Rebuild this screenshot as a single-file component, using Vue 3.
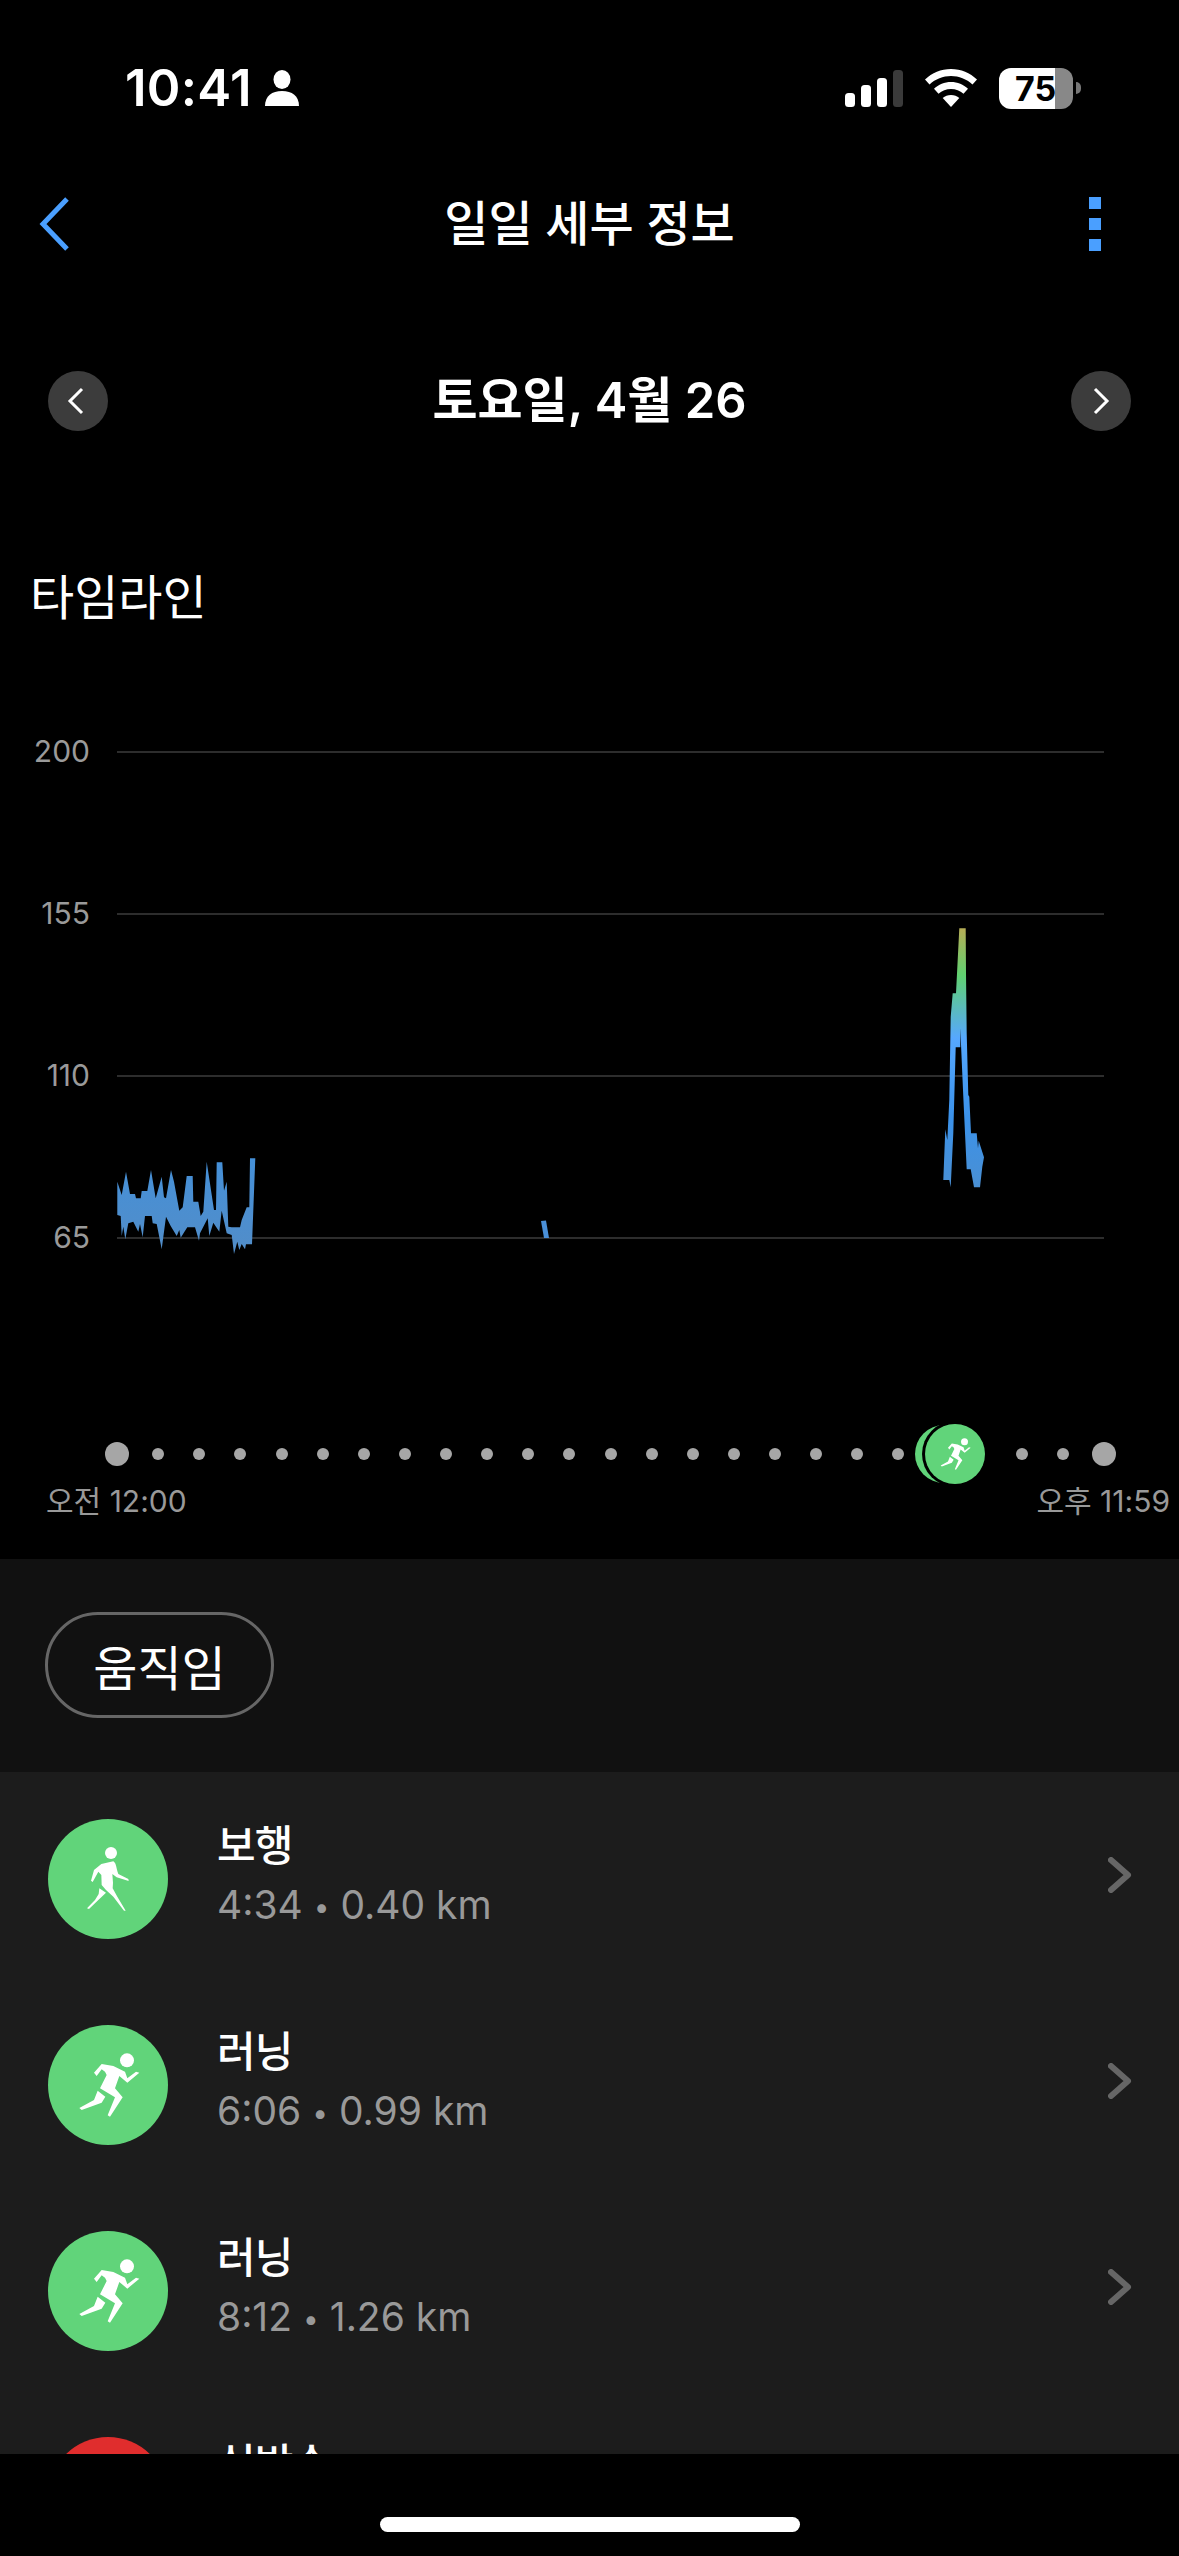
<script setup>
const walkPaths = [
  'M304 312 L340 304 C350 310 348 325 355 342 L385 357 L386 363 L350 352 L337 342 L339 368 L338 385 L352 410 L377 452 L372 452 L340 410 L318 390 L305 375 L304 345 L295 335 L278 366 L273 362 L282 330 Z',
  'M298 385 L318 398 L295 420 L267 447 L261 445 L285 420 L296 402 Z'
]
const runPaths = [
  'M282 938 L305 912 L340 918 L375 935 L382 955 L408 935 L418 938 L382 968 L358 948 L345 985 L368 1012 L330 1070 L323 1066 L345 1012 L300 985 L320 945 L315 935 L305 928 L290 948 Z',
  'M293 992 L316 1010 L305 1028 L245 1050 L238 1044 L282 1020 Z'
]
const rows = [
  { title: '보행', time: '4:34', dist: '0.40 km', kind: 'walk' },
  { title: '러닝', time: '6:06', dist: '0.99 km', kind: 'run' },
  { title: '러닝', time: '8:12', dist: '1.26 km', kind: 'run' },
  { title: '심박수', time: '', dist: '', kind: 'heart' }
]
const grid = [
  { y: 752, label: '200' },
  { y: 914, label: '155' },
  { y: 1076, label: '110' },
  { y: 1238, label: '65' }
]
const ticks = Array.from({ length: 25 }, (_, i) => i)

const leftPts = [[82,185],[95,225],[108,155],[120,222],[135,222],[138,235],[152,235],[155,213],[172,213],[183,150],[197,235],[215,170],[222,232],[228,235],[243,150],[252,185],[268,272],[278,262],[290,168],[308,168],[310,245],[325,245],[332,288],[340,275],[350,125],[372,270],[378,270],[380,127],[397,127],[402,212],[410,185],[415,320],[425,322],[450,322],[455,300],[470,262],[478,262],[480,115],[496,115],[486,373],[468,373],[465,388],[455,372],[448,390],[442,365],[432,402],[425,345],[410,340],[395,272],[388,335],[370,308],[358,348],[353,295],[330,340],[327,362],[315,322],[292,322],[272,353],[268,330],[260,348],[242,318],[228,290],[215,388],[200,312],[188,310],[185,288],[165,288],[158,352],[150,312],[145,335],[130,305],[115,310],[106,358],[100,320],[95,348],[92,288],[82,285]]
const leftPoly = leftPts.map(([x, y]) => `${(90 + x / 3).toFixed(1)},${(1120 + y / 3).toFixed(1)}`).join(' ')
const spikePts = [[178,85],[197,85],[198,220],[200,400],[205,585],[208,590],[213,700],[230,700],[234,745],[236,722],[252,772],[247,800],[240,862],[222,862],[212,808],[200,808],[195,700],[190,590],[181,385],[181,442],[167,442],[160,700],[152,862],[148,840],[130,840],[136,688],[142,720],[148,600],[152,350],[158,280],[168,280]]
const spikePoly = spikePts.map(([x, y]) => `${(900 + x / 3).toFixed(1)},${(900 + y / 3).toFixed(1)}`).join(' ')
</script>

<template>
  <div class="screen">
    <div class="status">
      <div class="status-left">
        <span class="clock">10:41</span>
        <svg class="person" width="36" height="36" viewBox="0 0 36 36">
          <ellipse cx="18" cy="9.5" rx="8.5" ry="9.5" fill="#fff" />
          <path d="M1 36 C1 26 8 21 18 21 C28 21 35 26 35 36 Z" fill="#fff" />
        </svg>
      </div>
      <div class="status-right">
        <svg width="58" height="37" viewBox="0 0 58 37" class="signal">
          <rect x="0" y="23" width="10" height="14" rx="3.5" fill="#fff" />
          <rect x="16" y="15" width="10" height="22" rx="3.5" fill="#fff" />
          <rect x="32" y="8" width="10" height="29" rx="3.5" fill="#fff" />
          <rect x="48" y="0" width="10" height="37" rx="3.5" fill="#3a3a3a" />
        </svg>
        <svg width="52" height="38" viewBox="0 0 52 38" class="wifi">
          <path d="M26 0 C36 0 45 4 52 10.5 L47.5 15.5 C41.5 10 34 7 26 7 C18 7 10.5 10 4.5 15.5 L0 10.5 C7 4 16 0 26 0 Z" fill="#fff" />
          <path d="M26 13 C32.5 13 38.5 15.5 43 19.8 L38.5 24.8 C35 21.6 30.7 20 26 20 C21.3 20 17 21.6 13.5 24.8 L9 19.8 C13.5 15.5 19.5 13 26 13 Z" fill="#fff" />
          <path d="M26 26 C29.3 26 32 27 34.3 29 L26 38 L17.7 29 C20 27 22.7 26 26 26 Z" fill="#fff" />
        </svg>
        <div class="battery">
          <div class="battery-body"><span>75</span></div>
          <div class="battery-tip"></div>
        </div>
      </div>
    </div>

    <div class="nav">
      <svg class="back" width="32" height="54" viewBox="0 0 32 54">
        <path d="M29 2 L5 27 L29 52" fill="none" stroke="#4a9fff" stroke-width="5" />
      </svg>
      <h1 class="nav-title">일일 세부 정보</h1>
      <div class="kebab"><i></i><i></i><i></i></div>
    </div>

    <div class="date-row">
      <div class="round">
        <svg class="arrow-left" width="20" height="28" viewBox="0 0 20 28"><path d="M16 2 L4 14 L16 26" fill="none" stroke="#fff" stroke-width="3" /></svg>
      </div>
      <div class="date">토요일, 4월 26</div>
      <div class="round">
        <svg width="20" height="28" viewBox="0 0 20 28"><path d="M4 2 L16 14 L4 26" fill="none" stroke="#fff" stroke-width="3" /></svg>
      </div>
    </div>

    <h2 class="section-title">타임라인</h2>

    <svg class="chart" width="1179" height="600" viewBox="0 700 1179 600">
      <defs>
        <linearGradient id="spikeGrad" gradientUnits="userSpaceOnUse" x1="0" y1="928" x2="0" y2="1190">
          <stop offset="0" stop-color="#b7ad56" />
          <stop offset="0.18" stop-color="#60d070" />
          <stop offset="0.42" stop-color="#56a8ff" />
          <stop offset="0.72" stop-color="#3b92ea" />
          <stop offset="1" stop-color="#4a8fd2" />
        </linearGradient>
        <linearGradient id="leftGrad" gradientUnits="userSpaceOnUse" x1="0" y1="1160" x2="0" y2="1255">
          <stop offset="0" stop-color="#4590d8" />
          <stop offset="1" stop-color="#528dc8" />
        </linearGradient>
      </defs>
      <g v-for="g in grid" :key="g.y">
        <line x1="117" x2="1104" :y1="g.y" :y2="g.y" stroke="#3d3d3d" stroke-width="1.5" />
        <text x="90" :y="g.y + 10" text-anchor="end" class="axis">{{ g.label }}</text>
      </g>
      <polygon :points="leftPoly" fill="url(#leftGrad)" />
      <path d="M541 1221 L546 1220.5 L549 1238 L544 1238 Z" fill="#4a90d8" />
      <polygon :points="spikePoly" fill="url(#spikeGrad)" />
    </svg>

    <div class="ticks">
      <div v-for="t in ticks" :key="t" class="tick">
        <span :class="['dot', { big: t === 0 || t === 24, hide: t === 20 || t === 21 }]"></span>
      </div>
      <div class="marker">
        <div class="crescent"></div>
        <div class="marker-main">
          <svg width="60" height="60" viewBox="144 795 360 360">
            <circle cx="381" cy="901" r="21" fill="#fff" />
            <path v-for="p in runPaths" :key="p" :d="p" fill="#fff" />
          </svg>
        </div>
      </div>
    </div>

    <div class="range">
      <span>오전 12:00</span>
      <span>오후 11:59</span>
    </div>

    <div class="filter">
      <div class="pill">움직임</div>
    </div>

    <div class="list">
      <div v-for="(r, i) in rows" :key="i" class="row">
        <div :class="['badge', r.kind]">
          <svg v-if="r.kind === 'walk'" width="120" height="120" viewBox="144 177 360 360">
            <circle cx="333" cy="279" r="18" fill="#fff" />
            <path v-for="p in walkPaths" :key="p" :d="p" fill="#fff" />
          </svg>
          <svg v-if="r.kind === 'run'" width="120" height="120" viewBox="144 795 360 360">
            <circle cx="381" cy="901" r="21" fill="#fff" />
            <path v-for="p in runPaths" :key="p" :d="p" fill="#fff" />
          </svg>
        </div>
        <div class="row-text">
          <div class="row-title">{{ r.title }}</div>
          <div class="row-sub">{{ r.time }}<span class="sep">•</span>{{ r.dist }}</div>
        </div>
        <svg class="chev" width="24" height="36" viewBox="0 0 24 36">
          <path d="M3 3 L20 18 L3 33" fill="none" stroke="#666" stroke-width="6" stroke-linecap="round" stroke-linejoin="round" />
        </svg>
      </div>
    </div>

    <div class="home"><div class="home-bar"></div></div>
  </div>
</template>

<style>
html, body { margin: 0; background: #000; }
</style>

<style scoped>
.screen {
  width: 1179px;
  height: 2556px;
  background: #000;
  color: #fff;
  display: flex;
  flex-direction: column;
  overflow: hidden;
  font-family: Inter, "Noto Sans CJK KR", sans-serif;
}
.status {
  height: 176px;
  flex: none;
  display: flex;
  justify-content: space-between;
  align-items: center;
  padding: 0 98px 0 125px;
}
.status-left { display: flex; align-items: center; gap: 12px; }
.clock { font-size: 51px; font-weight: 600; letter-spacing: 0.3px; line-height: 40px; }
.status-right { display: flex; align-items: center; }
.signal { margin-right: 22px; }
.wifi { margin-right: 22px; }
.battery { display: flex; align-items: center; gap: 3px; }
.battery-body {
  width: 74px;
  height: 41px;
  border-radius: 12px;
  background: linear-gradient(to right, #fff 56px, #888 56px);
  color: #000;
  font-size: 34px;
  font-weight: 700;
  line-height: 41px;
  padding-left: 16px;
  box-sizing: border-box;
}
.battery-tip {
  width: 5px;
  height: 12px;
  background: #777;
  border-radius: 0 6px 6px 0;
}
.nav {
  height: 96px;
  flex: none;
  display: grid;
  grid-template-columns: 1fr auto 1fr;
  align-items: center;
  padding: 0 78px 0 38px;
}
.nav-title { margin: 0 0 0 40px; font-size: 48px; font-weight: 500; line-height: 96px; }
.kebab { display: flex; flex-direction: column; gap: 9px; justify-self: end; }
.kebab i { display: block; width: 12px; height: 12px; background: #4a9fff; }
.date-row {
  margin-top: 81px;
  height: 96px;
  flex: none;
  display: flex;
  align-items: center;
  justify-content: space-between;
  padding: 0 48px;
}
.date { font-size: 49px; font-weight: 600; line-height: 96px; }
.round {
  width: 60px;
  height: 60px;
  border-radius: 50%;
  background: #3c3c3c;
  display: flex;
  align-items: center;
  justify-content: center;
}
.arrow-left { margin-right: 4px; }
.section-title {
  margin: 119px 0 0 30px;
  font-size: 48px;
  font-weight: 400;
  line-height: 60px;
  flex: none;
}
.chart { display: block; margin-top: 72px; flex: none; }
.axis { font-size: 30px; fill: #9a9a9a; font-family: Inter, sans-serif; }
.ticks {
  position: relative;
  margin-top: 142px;
  height: 24px;
  flex: none;
  display: flex;
  justify-content: space-between;
  padding: 0 63px 0 105px;
}
.tick { width: 24px; height: 24px; display: flex; align-items: center; justify-content: center; }
.dot { width: 12px; height: 12px; border-radius: 50%; background: #a6a6a6; }
.dot.big { width: 24px; height: 24px; }
.dot.hide { visibility: hidden; }
.marker { position: absolute; left: 915px; top: -18px; width: 70px; height: 60px; }
.crescent {
  position: absolute;
  left: 0;
  top: 1px;
  width: 58px;
  height: 58px;
  border-radius: 50%;
  background: #61d47a;
}
.marker-main {
  position: absolute;
  left: 10px;
  top: 0;
  width: 60px;
  height: 60px;
  border-radius: 50%;
  background: #61d47a;
  box-shadow: 0 0 0 3px #000;
  overflow: hidden;
}
.marker-main svg { display: block; }
.range {
  margin-top: 15px;
  height: 40px;
  flex: none;
  display: flex;
  justify-content: space-between;
  padding: 0 9px 0 46px;
  font-size: 30px;
  line-height: 40px;
  color: #999;
}
.filter {
  margin-top: 38px;
  height: 213px;
  flex: none;
  box-sizing: border-box;
  background: #111;
  padding: 53px 0 0 45px;
}
.pill {
  width: 229px;
  height: 106px;
  box-sizing: border-box;
  border: 3px solid #666;
  border-radius: 53px;
  display: flex;
  align-items: center;
  justify-content: center;
  font-size: 48px;
}
.list {
  height: 682px;
  flex: none;
  background: #1c1c1c;
  padding-top: 4px;
  box-sizing: border-box;
  overflow: hidden;
}
.row {
  height: 206px;
  display: flex;
  align-items: center;
  padding: 0 47px 0 48px;
}
.badge { width: 120px; height: 120px; border-radius: 50%; flex: none; }
.badge svg { display: block; }
.badge.walk, .badge.run { background: #61d47a; }
.badge.heart { background: #e02d2d; }
.row-text { margin: 0 0 9px 49px; flex: 1; }
.row-title { font-size: 42px; line-height: 56px; font-weight: 500; letter-spacing: -1px; }
.row-sub { font-size: 39px; line-height: 50px; color: #999; margin-top: 6px; }
.sep { font-size: 28px; margin: 0 11px; vertical-align: 2px; }
.chev { margin-bottom: 8px; flex: none; }
.home { flex: 1; padding-top: 63px; display: flex; justify-content: center; }
.home-bar { width: 420px; height: 15px; border-radius: 8px; background: #fff; }
</style>
